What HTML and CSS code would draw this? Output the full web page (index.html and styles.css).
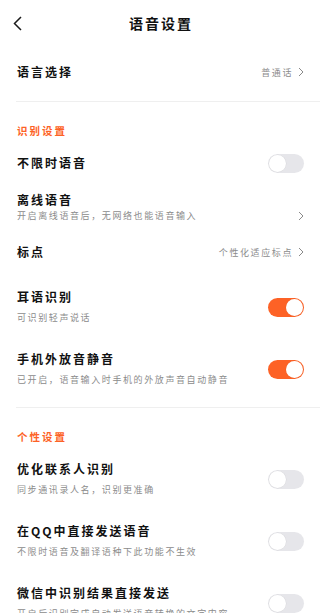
FILE: index.html
```html
<!DOCTYPE html>
<html lang="zh-CN">
<head>
  <meta charset="UTF-8" />
  <meta name="viewport" content="width=device-width, initial-scale=1.0" />
  <title>语音设置</title>
  <link rel="stylesheet" href="styles.css">
</head>
<body>
  <header class="topbar">
    <button class="back" aria-label="返回">
      <svg width="9" height="15" viewBox="0 0 9 15"><path d="M8 1 L1.5 7.5 L8 14" fill="none" stroke="#1a1a1a" stroke-width="1.5" stroke-linejoin="miter"/></svg>
    </button>
    <h1 class="title">语音设置</h1>
    <span></span>
  </header>

  <div class="row row-lang">
    <span class="row-title">语言选择</span>
    <span class="row-value">普通话
      <svg class="chev" width="6" height="10" viewBox="0 0 6 10"><path d="M1 1 L5 5 L1 9" fill="none" stroke="#8a8a8a" stroke-width="1"/></svg>
    </span>
  </div>
  <div class="divider"></div>

  <section class="group">
    <h2 class="section-title">识别设置</h2>

    <div class="row row-single row-first">
      <span class="row-title">不限时语音</span>
      <span class="switch"><span class="knob"></span></span>
    </div>

    <div class="row row-tight">
      <div class="row-text">
        <div class="row-title">离线语音</div>
        <div class="row-sub">开启离线语音后，无网络也能语音输入</div>
      </div>
      <svg class="chev chev-low" width="6" height="10" viewBox="0 0 6 10"><path d="M1 1 L5 5 L1 9" fill="none" stroke="#8a8a8a" stroke-width="1"/></svg>
    </div>

    <div class="row row-single">
      <span class="row-title">标点</span>
      <span class="row-value">个性化适应标点
        <svg class="chev" width="6" height="10" viewBox="0 0 6 10"><path d="M1 1 L5 5 L1 9" fill="none" stroke="#8a8a8a" stroke-width="1"/></svg>
      </span>
    </div>

    <div class="row row-double">
      <div class="row-text">
        <div class="row-title">耳语识别</div>
        <div class="row-sub">可识别轻声说话</div>
      </div>
      <span class="switch on"><span class="knob"></span></span>
    </div>

    <div class="row row-double">
      <div class="row-text">
        <div class="row-title">手机外放音静音</div>
        <div class="row-sub">已开启，语音输入时手机的外放声音自动静音</div>
      </div>
      <span class="switch on"><span class="knob"></span></span>
    </div>
  </section>
  <div class="divider divider-mid"></div>

  <section class="group">
    <h2 class="section-title">个性设置</h2>

    <div class="row row-double">
      <div class="row-text">
        <div class="row-title">优化联系人识别</div>
        <div class="row-sub">同步通讯录人名，识别更准确</div>
      </div>
      <span class="switch"><span class="knob"></span></span>
    </div>

    <div class="row row-double">
      <div class="row-text">
        <div class="row-title">在QQ中直接发送语音</div>
        <div class="row-sub">不限时语音及翻译语种下此功能不生效</div>
      </div>
      <span class="switch"><span class="knob"></span></span>
    </div>

    <div class="row row-double">
      <div class="row-text">
        <div class="row-title">微信中识别结果直接发送</div>
        <div class="row-sub">开启后识别完成自动发送语音转换的文字内容</div>
      </div>
      <span class="switch"><span class="knob"></span></span>
    </div>
  </section>
</body>
</html>
```

FILE: styles.css
```css
:root {
  --accent: #fd6226;
  --text: #111;
  --sub: #8c8c8c;
  --line: #efefef;
  --font-main: "Noto Sans CJK SC", sans-serif;
}

body {
  margin: 0;
  background: #fff;
  font-family: var(--font-main);
  color: var(--text);
  overflow: hidden;
}

.topbar {
  display: grid;
  grid-template-columns: 40px 1fr 40px;
  align-items: center;
  height: 46px;
}

.back {
  display: flex;
  align-items: center;
  height: 46px;
  padding: 0 0 0 13px;
  border: none;
  background: none;
}

.title {
  margin: 0;
  text-align: center;
  font-size: 14px;
  font-weight: 700;
  letter-spacing: 2px;
  padding-left: 2px;
  line-height: 46px;
}

.row {
  display: flex;
  align-items: center;
  justify-content: space-between;
  padding: 0 16px 0 17px;
}

.row-lang {
  height: 52px;
  margin-bottom: 3px;
}

.row-single {
  height: 44px;
}

.row-first {
  height: 46px;
}

.row-tight {
  padding-top: 6px;
  padding-bottom: 7px;
}

.row-tight .row-sub {
  margin-top: 1px;
}

.row-double {
  padding-top: 15px;
  padding-bottom: 11px;
}

.row-title {
  font-size: 12px;
  font-weight: 700;
  letter-spacing: 2px;
  line-height: 16px;
  white-space: nowrap;
}

.row-sub {
  margin-top: 6px;
  font-size: 9px;
  letter-spacing: 1.6px;
  line-height: 14px;
  color: var(--sub);
  white-space: nowrap;
}

.row-value {
  display: flex;
  align-items: center;
  gap: 5px;
  font-size: 9px;
  letter-spacing: 1.6px;
  color: var(--sub);
}

.chev {
  flex: none;
}

.chev-low {
  margin-top: 16px;
}

.divider {
  height: 1px;
  margin-left: 16px;
  background: var(--line);
}

.divider-mid {
  margin-top: 9px;
}

.section-title {
  margin: 0;
  padding: 20px 17px 0;
  font-size: 10.5px;
  font-weight: 700;
  letter-spacing: 2px;
  line-height: 18px;
  color: var(--accent);
}

.switch {
  display: flex;
  align-items: center;
  flex: none;
  box-sizing: border-box;
  width: 36px;
  height: 19px;
  padding: 1px;
  border-radius: 10px;
  background: #e6e6ea;
}

.switch.on {
  justify-content: flex-end;
  background: var(--accent);
}

.knob {
  width: 17px;
  height: 17px;
  border-radius: 50%;
  background: #fff;
  box-shadow: 0 0 0 0.5px rgba(0,0,0,0.06);
}
```
